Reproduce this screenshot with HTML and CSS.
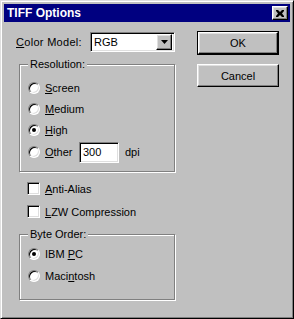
FILE: index.html
```html
<!DOCTYPE html>
<html lang="en">
<head>
    <meta charset="UTF-8">
    <title>TIFF Options</title>
    <link rel="stylesheet" href="styles.css">
</head>
<body>
    <div class="dlg">
        <div class="dlg-title">
            <span class="dlg-title-text">TIFF Options</span>
            <span class="dlg-close">
                <svg width="8" height="7" viewBox="0 0 8 7"><path d="M0 0h2l2 2 2-2h2v1l-2 2.5 2 2.5v1h-2l-2-2-2 2h-2v-1l2-2.5-2-2.5z" fill="#000"/></svg>
            </span>
        </div>
        <div class="dlg-body">
            <div class="dlg-left">
                <div class="row-model">
                    <span class="lbl-model"><u>C</u>olor Model:</span>
                    <div class="combo">
                        <span class="combo-val">RGB</span>
                        <span class="combo-btn">
                            <svg width="7" height="4" viewBox="0 0 7 4"><path d="M0 0h7l-3.5 4z" fill="#000"/></svg>
                        </span>
                    </div>
                </div>

                <div class="group group-res">
                    <span class="group-legend">Resolution:</span>
                    <div class="opt"><span class="radio"></span><span><u>S</u>creen</span></div>
                    <div class="opt"><span class="radio"></span><span><u>M</u>edium</span></div>
                    <div class="opt"><span class="radio checked"></span><span><u>H</u>igh</span></div>
                    <div class="opt opt-other">
                        <span class="radio"></span><span class="other-lbl"><u>O</u>ther</span>
                        <span class="field">300</span>
                        <span class="dpi">dpi</span>
                    </div>
                </div>

                <div class="chk-row chk-first"><span class="chk"></span><span><u>A</u>nti-Alias</span></div>
                <div class="chk-row"><span class="chk"></span><span><u>L</u>ZW Compression</span></div>

                <div class="group group-byte">
                    <span class="group-legend">Byte Order:</span>
                    <div class="opt"><span class="radio checked"></span><span>IBM <u>P</u>C</span></div>
                    <div class="opt"><span class="radio"></span><span>Maci<u>n</u>tosh</span></div>
                </div>
            </div>
            <div class="dlg-right">
                <div class="btn-default"><div class="btn">OK</div></div>
                <div class="btn btn-cancel">Cancel</div>
            </div>
        </div>
    </div>
</body>
</html>
```

FILE: styles.css
```css
body {
    margin: 0;
    padding: 0;
    background: #c0c0c0;
    font-family: 'Liberation Sans', Arial, sans-serif;
    font-size: 11px;
    color: #000;
}
u {
    text-decoration: underline;
    text-underline-offset: 1px;
}
.dlg {
    width: 294px;
    height: 319px;
    box-sizing: border-box;
    background: #c0c0c0;
    border: 1px solid;
    border-color: #dfdfdf #000 #000 #dfdfdf;
    box-shadow: inset 1px 1px #fff, inset -1px -1px #808080;
    padding: 3px;
}
.dlg-title {
    height: 18px;
    background: #000080;
    display: flex;
    align-items: center;
    justify-content: space-between;
    padding: 0 2px 0 3px;
}
.dlg-title-text {
    color: #fff;
    font-weight: bold;
    font-size: 12px;
}
.dlg-close {
    width: 16px;
    height: 14px;
    box-sizing: border-box;
    background: #c0c0c0;
    border: 1px solid;
    border-color: #fff #000 #000 #fff;
    box-shadow: inset -1px -1px #808080, inset 1px 1px #dfdfdf;
    display: flex;
    align-items: center;
    justify-content: center;
}
.dlg-body {
    display: flex;
    padding: 10px 0 0 12px;
}
.dlg-left {
    width: 160px;
}
.row-model {
    display: flex;
    align-items: center;
    height: 20px;
}
.lbl-model {
    width: 74px;
    letter-spacing: 0.3px;
}
.combo {
    width: 85px;
    height: 20px;
    box-sizing: border-box;
    background: #fff;
    border: 1px solid;
    border-color: #808080 #fff #fff #808080;
    box-shadow: inset 1px 1px #000, inset -1px -1px #dfdfdf;
    display: flex;
    align-items: center;
    justify-content: space-between;
    padding: 2px;
}
.combo-val {
    padding-left: 1px;
}
.combo-btn, .btn {
    box-sizing: border-box;
    background: #c0c0c0;
    border: 1px solid;
    border-color: #fff #000 #000 #fff;
    box-shadow: inset -1px -1px #808080, inset 1px 1px #dfdfdf;
}
.combo-btn {
    width: 16px;
    height: 16px;
    display: flex;
    align-items: center;
    justify-content: center;
}
.group {
    position: relative;
    margin-left: 3px;
    width: 156px;
    box-sizing: border-box;
    border: 1px solid #808080;
    box-shadow: inset 1px 1px #fff, 1px 1px #fff;
    padding-left: 8px;
}
.group-legend {
    position: absolute;
    top: -7px;
    left: 8px;
    padding: 0 2px;
    background: #c0c0c0;
}
.group-res {
    margin-top: 12px;
    height: 108px;
    padding-top: 12px;
}
.group-byte {
    margin-top: 11px;
    height: 66px;
    padding-top: 8px;
}
.opt {
    display: flex;
    align-items: center;
    gap: 5px;
    height: 21px;
}
.group-byte .opt {
    height: 22px;
}
.opt-other {
    height: 22px;
    margin-top: 1px;
}
.radio {
    width: 12px;
    height: 12px;
    box-sizing: border-box;
    border-radius: 50%;
    background: #fff;
    border: 1px solid;
    border-color: #808080 #fff #fff #808080;
    box-shadow: inset 1px 1px #000, inset -1px -1px #dfdfdf;
    display: flex;
    align-items: center;
    justify-content: center;
}
.radio.checked::after {
    content: "";
    width: 4px;
    height: 4px;
    border-radius: 50%;
    background: #000;
}
.other-lbl {
    width: 29px;
}
.field {
    width: 40px;
    height: 21px;
    box-sizing: border-box;
    background: #fff;
    border: 1px solid;
    border-color: #808080 #fff #fff #808080;
    box-shadow: inset 1px 1px #000, inset -1px -1px #dfdfdf;
    display: flex;
    align-items: center;
    padding-left: 3px;
}
.dpi {
    margin-left: 1px;
}
.chk-row {
    display: flex;
    align-items: center;
    gap: 5px;
    height: 23px;
    padding-left: 11px;
}
.chk-first {
    margin-top: 5px;
}
.chk {
    width: 13px;
    height: 13px;
    box-sizing: border-box;
    background: #fff;
    border: 1px solid;
    border-color: #808080 #fff #fff #808080;
    box-shadow: inset 1px 1px #000, inset -1px -1px #dfdfdf;
}
.dlg-right {
    margin-left: 21px;
    display: flex;
    flex-direction: column;
}
.btn-default {
    width: 82px;
    height: 24px;
    box-sizing: border-box;
    border: 1px solid #000;
    margin-top: -1px;
}
.btn {
    width: 100%;
    height: 100%;
    display: flex;
    align-items: center;
    justify-content: center;
}
.btn-cancel {
    width: 82px;
    height: 23px;
    margin-top: 9px;
}
```
